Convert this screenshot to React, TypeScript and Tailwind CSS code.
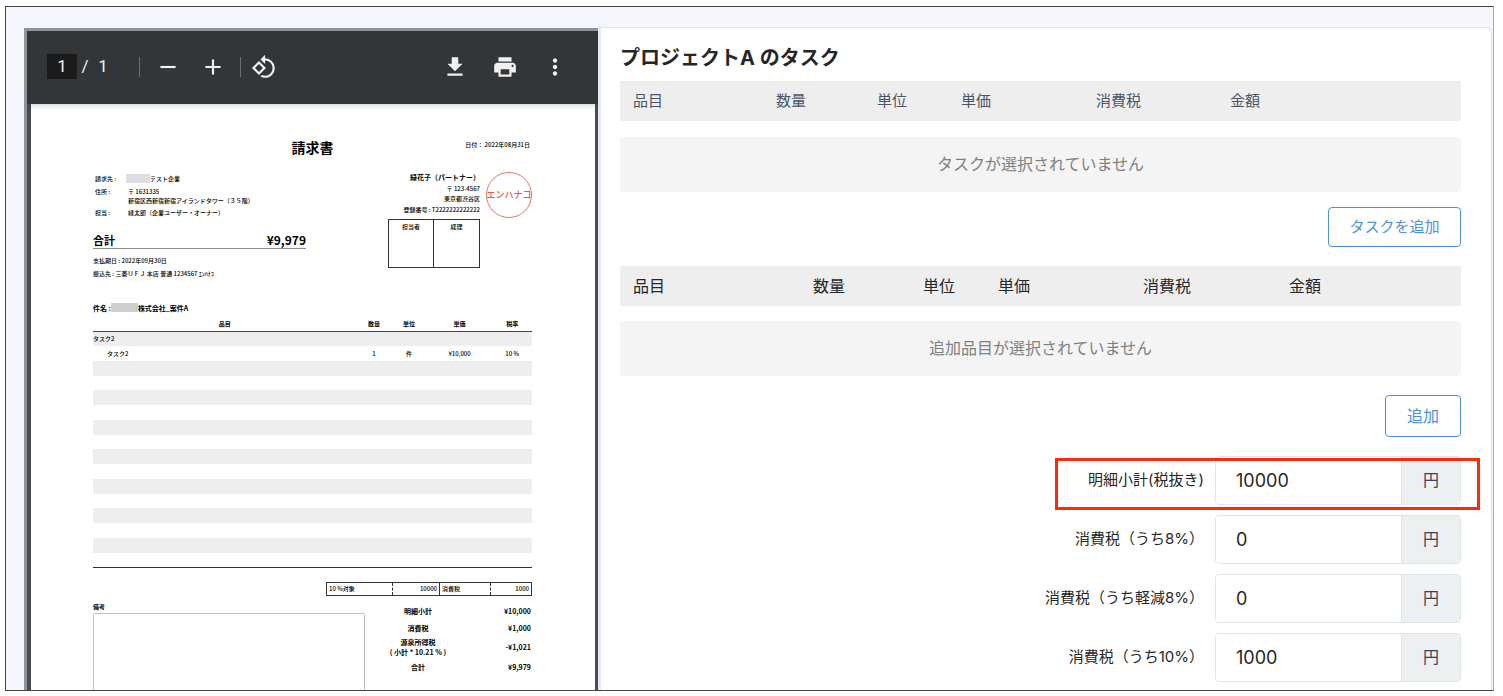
import type { ReactNode } from "react";
import {
  MdAdd,
  MdGetApp,
  MdMoreVert,
  MdPrint,
  MdRemove,
  MdRotate90DegreesCcw,
} from "react-icons/md";

const taskColumns = [
  { label: "品目", width: "w-[143px]" },
  { label: "数量", width: "w-[101px]" },
  { label: "単位", width: "w-[84px]" },
  { label: "単価", width: "w-[135px]" },
  { label: "消費税", width: "w-[134px]" },
  { label: "金額", width: "w-auto" },
];

const extraColumns = [
  { label: "品目", width: "w-[180px]" },
  { label: "数量", width: "w-[110px]" },
  { label: "単位", width: "w-[75px]" },
  { label: "単価", width: "w-[145px]" },
  { label: "消費税", width: "w-[146px]" },
  { label: "金額", width: "w-auto" },
];

const amounts = [
  { id: "subtotal", label: "明細小計(税抜き)", value: "10000", marked: true },
  { id: "tax8", label: "消費税（うち8%）", value: "0" },
  { id: "tax8r", label: "消費税（うち軽減8%）", value: "0" },
  { id: "tax10", label: "消費税（うち10%）", value: "1000" },
];

const invoiceRows = [
  ["タスク2", "", "", "", ""],
  ["タスク2", "1", "件", "¥10,000", "10 %"],
  ...Array.from({ length: 14 }, () => ["", "", "", "", ""]),
];

function ToolButton({ label, wide, children }: { label: string; wide?: boolean; children: ReactNode }) {
  return (
    <button
      aria-label={label}
      className={`${wide ? "w-[50px]" : "w-[45px]"} h-10 flex items-center justify-center text-[26px]`}
    >
      {children}
    </button>
  );
}

function Toolbar() {
  return (
    <div className="relative z-10 h-[73px] shrink-0 flex items-center justify-between bg-[#323639] pb-0.5 pl-5 pr-[18px] text-[#f1f1f1] shadow-md font-[Roboto,'Noto_Sans_CJK_JP',sans-serif] text-[17px]">
      <div className="flex items-center">
        <input
          aria-label="ページ"
          defaultValue="1"
          className="w-[30px] h-[25px] bg-[#1b1b1c] text-center"
        />
        <span className="w-4 text-center">/</span>
        <span className="w-5 text-center">1</span>
        <span className="ml-[26px] mr-[5px] w-px h-5 bg-[#6a6d70]" />
        <ToolButton label="縮小">
          <MdRemove />
        </ToolButton>
        <ToolButton label="拡大">
          <MdAdd />
        </ToolButton>
        <span className="ml-[5px] w-px h-5 bg-[#6a6d70]" />
        <ToolButton label="回転">
          <MdRotate90DegreesCcw />
        </ToolButton>
      </div>
      <div className="flex items-center">
        <ToolButton label="ダウンロード" wide>
          <MdGetApp />
        </ToolButton>
        <ToolButton label="印刷" wide>
          <MdPrint />
        </ToolButton>
        <ToolButton label="その他" wide>
          <MdMoreVert />
        </ToolButton>
      </div>
    </div>
  );
}

function BillTo() {
  return (
    <div className="w-[213px] pt-0.5">
      <dl className="pl-0.5">
        <div className="flex leading-[10px]">
          <dt className="w-[31px]">請求先 :</dt>
          <dd className="flex">
            <span className="w-6 h-[9px] bg-[#dedede]" />
            テスト企業
          </dd>
        </div>
        <div className="mt-[3px] flex leading-[9px]">
          <dt className="w-[33px]">住所 :</dt>
          <dd className="whitespace-nowrap">
            〒 1631335
            <br />
            新宿区西新宿新宿アイランドタワー（３５階）
          </dd>
        </div>
        <div className="mt-[3px] flex leading-[10px]">
          <dt className="w-[33px]">担当 :</dt>
          <dd>緑太郎（企業ユーザー・オーナー）</dd>
        </div>
      </dl>
      <div className="mt-[14px] flex justify-between border-b border-[#8c8c8c] font-bold leading-4">
        <span className="text-[11px]">合計</span>
        <span className="text-[12px]">¥9,979</span>
      </div>
      <p className="mt-[7px] leading-[10px]">支払期日 : 2022年09月30日</p>
      <p className="mt-[3px] leading-[10px]">振込先 : 三菱ＵＦＪ 本店 普通 1234567 ｴﾝﾊﾅｺ</p>
    </div>
  );
}

function BillFrom() {
  return (
    <div className="flex gap-1.5">
      <div className="w-[92px] flex flex-col items-end leading-[10px] whitespace-nowrap">
        <p className="text-[7px] font-bold">緑花子（パートナー）</p>
        <p className="mt-0.5">〒 123-4567</p>
        <p>東京都渋谷区</p>
        <p className="mt-px">登録番号 : T2222222222222</p>
        <div className="mt-1 w-full h-[49px] grid grid-cols-2 border border-[#333] text-center">
          <span className="border-r border-[#333] pt-0.5">担当者</span>
          <span className="pt-0.5">経理</span>
        </div>
      </div>
      <div className="size-[46px] flex items-center justify-center rounded-full border border-[#e57368] text-[9px] text-[#e2574c] whitespace-nowrap">
        エンハナコ
      </div>
    </div>
  );
}

function InvoiceTable() {
  return (
    <table className="mt-1 w-full table-fixed border-collapse text-center leading-[10px]">
      <thead>
        <tr className="h-[14px] border-b border-[#444] font-bold">
          <th className="w-[60%] p-0">品目</th>
          <th className="w-[8%] p-0">数量</th>
          <th className="w-[8%] p-0">単位</th>
          <th className="w-[15%] p-0">単価</th>
          <th className="w-[9%] p-0">税率</th>
        </tr>
      </thead>
      <tbody className="border-b border-[#333]">
        {invoiceRows.map(([name, ...cells], i) => (
          <tr key={i} className="h-[15px] [&:nth-child(4n)]:h-[14px] odd:bg-[#eeeeee]">
            <td className={`p-0 text-left ${i === 1 ? "pl-3.5" : ""}`}>{name}</td>
            {cells.map((cell, j) => (
              <td key={j} className="p-0">
                {cell}
              </td>
            ))}
          </tr>
        ))}
      </tbody>
    </table>
  );
}

function InvoiceTotals() {
  return (
    <dl className="w-[148px] pr-px text-[7px] font-bold leading-[10px]">
      <div className="h-[18px] flex items-center justify-between">
        <dt className="w-[68px] text-center">明細小計</dt>
        <dd>¥10,000</dd>
      </div>
      <div className="h-4 flex items-center justify-between">
        <dt className="w-[68px] text-center">消費税</dt>
        <dd>¥1,000</dd>
      </div>
      <div className="h-[22px] flex items-center justify-between">
        <dt className="w-[68px] text-center">
          源泉所得税
          <br />( 小計 * 10.21 % )
        </dt>
        <dd>-¥1,021</dd>
      </div>
      <div className="h-[18px] flex items-center justify-between">
        <dt className="w-[68px] text-center">合計</dt>
        <dd>¥9,979</dd>
      </div>
    </dl>
  );
}

function Invoice() {
  return (
    <div className="grow bg-white pt-[33px] pl-[62px] pr-[63px] font-['Noto_Sans_CJK_JP',sans-serif] text-[6px] font-medium text-black">
      <div className="grid grid-cols-3 items-start">
        <span />
        <h1 className="text-center text-[14px] leading-5 font-bold">請求書</h1>
        <p className="text-right leading-4 pr-0.5">日付： 2022年08月31日</p>
      </div>

      <div className="mt-[15px] flex items-start justify-between">
        <BillTo />
        <BillFrom />
      </div>

      <p className="mt-6 flex text-[7px] leading-[10px] font-bold">
        件名 :
        <span className="w-[27px] h-[9px] bg-[#cfcfcf]" />
        株式会社_案件A
      </p>

      <InvoiceTable />

      <div className="mt-[14px] flex justify-end">
        <table className="w-[206px] table-fixed border-collapse border border-[#333] leading-[10px]">
          <tbody>
            <tr className="h-[13px]">
              <td className="w-[66px] py-0 px-0.5 border-r border-dashed border-[#333]">10 %対象</td>
              <td className="w-[47px] py-0 px-0.5 border-r border-[#333] text-right">10000</td>
              <td className="w-[51px] py-0 px-0.5 border-r border-dashed border-[#333]">消費税</td>
              <td className="py-0 px-0.5 text-right">1000</td>
            </tr>
          </tbody>
        </table>
      </div>

      <div className="mt-[6px] flex items-start justify-between">
        <div className="w-[272px]">
          <p className="leading-[10px] font-bold">備考</p>
          <div className="mt-px h-[120px] rounded-xs border border-[#c4c4c4]" />
        </div>
        <InvoiceTotals />
      </div>
    </div>
  );
}

function HeaderTable({ columns, className }: { columns: typeof taskColumns; className: string }) {
  return (
    <table className={`w-full table-fixed bg-[#eeeeee] text-left ${className}`}>
      <thead>
        <tr className="h-10">
          {columns.map(({ label, width }) => (
            <th key={label} className={`${width} py-0 pl-[13px] font-normal`}>
              {label}
            </th>
          ))}
        </tr>
      </thead>
    </table>
  );
}

function EmptyBox({ children }: { children: ReactNode }) {
  return (
    <p className="h-[55px] flex items-center justify-center rounded bg-[#f4f4f4] pb-0.5 text-base text-[#808080]">
      {children}
    </p>
  );
}

function AmountRow({ id, label, value, marked }: { id: string; label: string; value: string; marked?: boolean }) {
  return (
    <div className="relative flex items-center justify-end">
      <label htmlFor={id} className="mr-[11px] text-[15px]">
        {label}
      </label>
      <div className="w-[246px] h-[49px] flex rounded border border-[#dfe6e8] overflow-hidden">
        <input id={id} defaultValue={value} className="min-w-0 grow bg-white pl-5 text-lg" />
        <span className="w-[59px] shrink-0 flex items-center justify-center border-l border-[#dfe6e8] bg-[#ecf0f1] pb-0.5 text-base text-[#3d4058]">
          円
        </span>
      </div>
      {marked && (
        <div className="pointer-events-none absolute top-0.5 -right-[19px] w-[425px] h-[52px] border-3 border-[#fb2a08]" />
      )}
    </div>
  );
}

export default function App() {
  return (
    <div className="h-screen bg-white pt-1.5 pr-[9px] pb-[5px] pl-[5px] font-[Inter,'Noto_Sans_CJK_JP',sans-serif] text-[#262626]">
      <div className="h-full overflow-hidden border border-[#444] border-r-[#aaaaaa] bg-[#f5f6fb] pt-5 pl-[18px] pr-px">
        <div className="h-full grid grid-cols-[574fr_894fr]">
          {/* PDF viewer */}
          <section className="mt-px min-h-0 overflow-hidden flex flex-col border-t-3 border-l-3 border-[#8f9297] bg-[#4a4c51]">
            <Toolbar />
            <div className="grow flex flex-col pl-1 pr-[3px]">
              <Invoice />
            </div>
          </section>

          {/* Task form */}
          <section className="min-h-0 overflow-hidden rounded-tr-md border-t border-r border-l-3 border-t-[#e2e2e4] border-r-[#e2e2e4] border-l-[#e4e9f4] bg-white pt-[18px] pl-[19px] pr-[30px]">
            <h2 className="text-xl leading-6 font-bold">プロジェクトA のタスク</h2>
            <div className="mt-[11px] mb-4">
              <HeaderTable columns={taskColumns} className="text-[15px] text-[#4a5568]" />
            </div>
            <EmptyBox>タスクが選択されていません</EmptyBox>
            <div className="mt-[15px] mb-[19px] flex justify-end">
              <button className="w-[133px] h-10 rounded border border-[#4a90e2] text-[15px] text-[#4a90e2]">
                タスクを追加
              </button>
            </div>

            <div className="mb-[15px]">
              <HeaderTable columns={extraColumns} className="text-base" />
            </div>
            <EmptyBox>追加品目が選択されていません</EmptyBox>
            <div className="mt-[19px] mb-[19px] flex justify-end">
              <button className="w-[76px] h-[42px] rounded border border-[#4a90e2] text-base text-[#4a90e2]">
                追加
              </button>
            </div>

            <div className="flex flex-col gap-2.5">
              {amounts.map((row) => (
                <AmountRow key={row.id} {...row} />
              ))}
            </div>
          </section>
        </div>
      </div>
    </div>
  );
}
